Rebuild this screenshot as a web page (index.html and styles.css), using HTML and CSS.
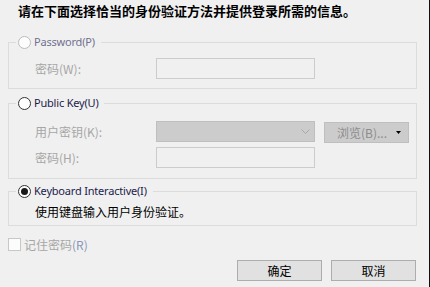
FILE: index.html
```html
<!DOCTYPE html>
<html lang="zh-CN">
<head>
<meta charset="utf-8">
<title>身份验证</title>
<link rel="stylesheet" href="styles.css">
</head>
<body>
<div class="dialog">
  <h1 class="title">请在下面选择恰当的身份验证方法并提供登录所需的信息。</h1>

  <fieldset class="group group-password">
    <legend class="legend legend-disabled"><input type="radio" class="radio radio-disabled" name="m" disabled><span>Password(P)</span></legend>
    <div class="row">
      <span class="label">密码(W):</span>
      <span class="field"></span>
    </div>
  </fieldset>

  <fieldset class="group group-key">
    <legend class="legend"><input type="radio" class="radio" name="m"><span>Public Key(U)</span></legend>
    <div class="row">
      <span class="label">用户密钥(K):</span>
      <span class="combo"><svg class="chev" width="9" height="6" viewBox="0 0 9 6"><path d="M0.5 0.5 L4.5 4.5 L8.5 0.5" fill="none" stroke="#a8a8a8" stroke-width="1"/></svg></span>
      <span class="browse"><span class="browse-text">浏览(B)...</span><svg class="tri" width="5" height="3" viewBox="0 0 5 3"><path d="M0 0 H5 L2.5 3 Z" fill="#000"/></svg></span>
    </div>
    <div class="row">
      <span class="label">密码(H):</span>
      <span class="field"></span>
    </div>
  </fieldset>

  <fieldset class="group group-kbd">
    <legend class="legend"><input type="radio" class="radio radio-checked" name="m" checked><span>Keyboard Interactive(I)</span></legend>
    <p class="desc">使用键盘输入用户身份验证。</p>
  </fieldset>

  <div class="remember">
    <span class="checkbox"></span>
    <span class="remember-text">记住密码<span class="accel">(R)</span></span>
  </div>

  <div class="buttons">
    <button class="btn">确定</button>
    <button class="btn">取消</button>
  </div>
</div>
</body>
</html>
```

FILE: styles.css
```css
html, body {
  margin: 0;
  padding: 0;
  background: #f0f0f0;
}

.dialog {
  box-sizing: border-box;
  width: 430px;
  height: 287px;
  padding: 0 12px 0 8px;
  border-right: 1px solid #111;
  background: #f0f0f0;
  font-family: "Noto Sans CJK SC", sans-serif;
  font-size: 12px;
  color: #000;
  display: flex;
  flex-direction: column;
}

.title {
  margin: 0;
  padding: 2px 0 0 10px;
  font-family: "Noto Sans CJK SC", sans-serif;
  font-size: 13px;
  font-weight: bold;
  line-height: 17px;
  color: #000;
}

.group {
  margin: 0;
  border: 1px solid #dcdcdc;
  padding: 0;
  min-width: 0;
}

.group-password {
  margin-top: 16px;
  padding: 9px 0 9px 0;
}

.group-key {
  margin-top: 7px;
  padding: 11px 0 10px 0;
  display: flex;
  flex-direction: column;
  gap: 5px;
}

.group-kbd {
  margin-top: 5px;
  padding: 6px 0 5px 0;
}

.legend {
  margin-left: 7px;
  padding: 0 6px 0 2px;
  height: 14px;
  line-height: 14px;
  display: flex;
  align-items: center;
  gap: 3px;
  font-family: "Noto Sans", sans-serif;
  font-size: 11px;
  letter-spacing: -0.2px;
  color: #1c1c4c;
}

.legend-disabled {
  color: #707090;
}

.radio {
  appearance: none;
  -webkit-appearance: none;
  margin: 0;
  width: 13px;
  height: 13px;
  box-sizing: border-box;
  border: 1px solid #333;
  border-radius: 50%;
  background: #fff;
  position: relative;
  flex: none;
}

.radio-disabled {
  border-color: #bcbcbc;
  background: #fcfcfc;
}

.radio-checked::after {
  content: "";
  position: absolute;
  left: 2px;
  top: 2px;
  width: 7px;
  height: 7px;
  border-radius: 50%;
  background: #1a1a1a;
}

.row {
  display: flex;
  align-items: center;
  height: 21px;
  padding-left: 26px;
}

.label {
  width: 121px;
  flex: none;
  color: #a6a6a6;
}

.field {
  box-sizing: border-box;
  width: 159px;
  height: 21px;
  border: 1px solid #cccccc;
  background: #f0f0f0;
}

.combo {
  box-sizing: border-box;
  width: 159px;
  height: 21px;
  border: 1px solid #bfbfbf;
  background: #cccccc;
  display: flex;
  align-items: center;
  justify-content: flex-end;
  padding-right: 4px;
}

.browse {
  box-sizing: border-box;
  margin-left: 9px;
  width: 85px;
  height: 21px;
  margin-top: 2px;
  border: 1px solid #bfbfbf;
  background: #cccccc;
  display: flex;
  align-items: center;
  justify-content: flex-end;
  padding-right: 7px;
  gap: 9px;
}

.browse-text {
  color: #8c8c8c;
}

.tri {
  display: block;
}

.desc {
  margin: 0;
  padding-left: 26px;
  line-height: 16px;
  color: #000;
}

.remember {
  margin-top: 11px;
  height: 14px;
  display: flex;
  align-items: center;
  gap: 3px;
}

.checkbox {
  box-sizing: border-box;
  width: 13px;
  height: 13px;
  border: 1px solid #c8c8c8;
  background: #fcfcfc;
}

.remember-text {
  color: #a6a6a6;
}

.accel {
  color: #8a96b8;
}

.buttons {
  margin-top: 9px;
  display: flex;
  justify-content: flex-end;
  gap: 9px;
  padding-right: 1px;
}

.btn {
  box-sizing: border-box;
  width: 85px;
  height: 21px;
  margin: 0;
  padding: 0;
  border: 1px solid #adadad;
  background: #e1e1e1;
  font-family: "Noto Sans CJK SC", sans-serif;
  font-size: 12px;
  color: #000;
  line-height: 19px;
}
```
